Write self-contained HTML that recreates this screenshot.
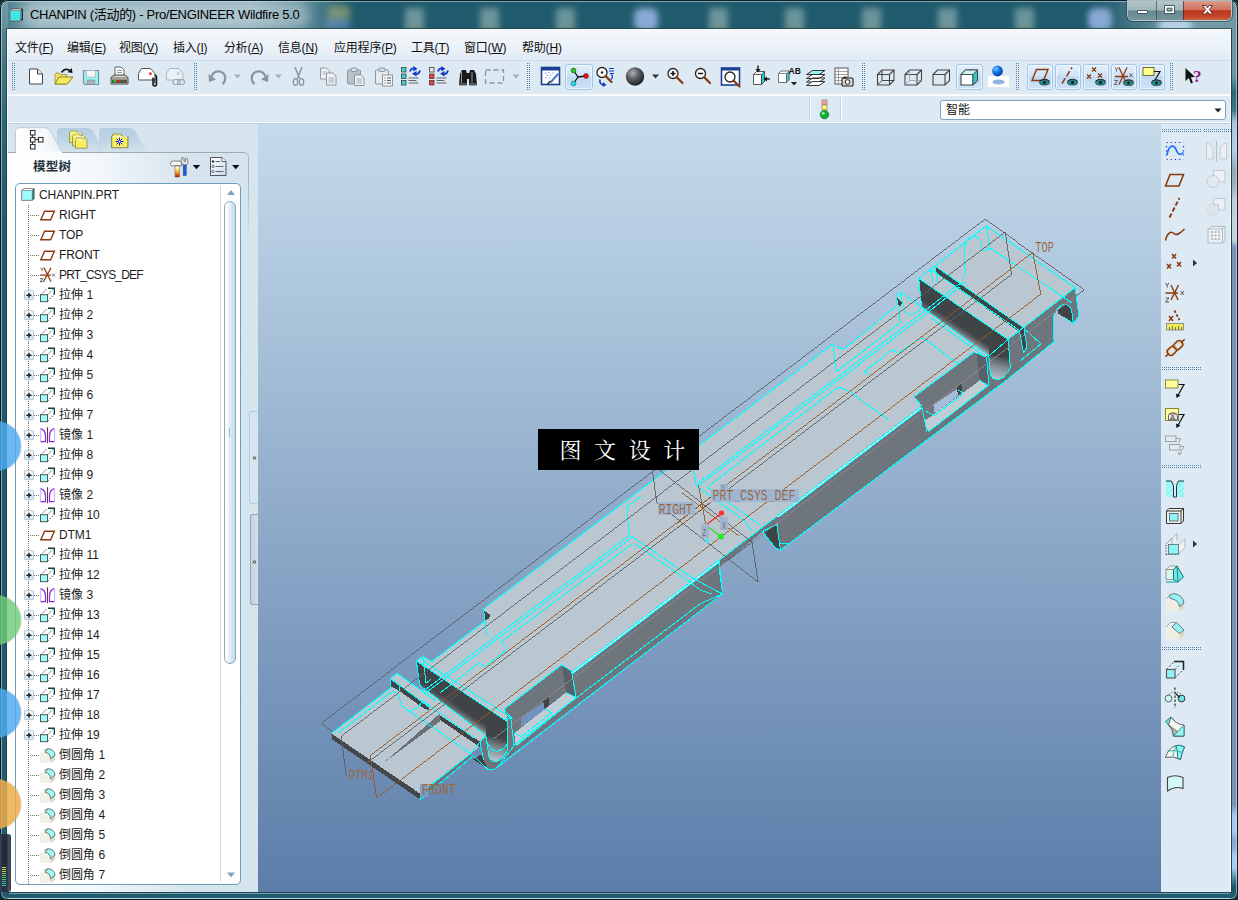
<!DOCTYPE html>
<html lang="zh">
<head>
<meta charset="utf-8">
<title>CHANPIN - Pro/ENGINEER Wildfire 5.0</title>
<style>
*{box-sizing:border-box;margin:0;padding:0}
html,body{width:1238px;height:900px;overflow:hidden}
body{position:relative;background:#0b2d2c;font-family:"Liberation Sans","Noto Sans CJK SC",sans-serif;font-size:13px;color:#1a1a1a}
div,span,svg{position:absolute}
#frame{left:0;top:0;width:1238px;height:900px;background:#205b6d;border-radius:8px 8px 7px 7px;overflow:hidden}
#frameedge{left:0;top:0;width:1238px;height:900px;border:1px solid #0a1d24;border-radius:8px 8px 7px 7px;box-shadow:inset 0 0 0 1px rgba(210,235,240,.55)}
#rightglow{left:1232px;top:0;width:5px;height:892px;background:linear-gradient(to bottom,#6f97a2 0,#6f97a2 75px,#2e6a7a 92px,#3f7483 110px,#a9c4e2 122px,#b5cde8 150px,#98a8b8 170px,#a3b1c0 188px,#c5ced8 200px,#c9d1da 240px,#7a95b8 247px,#7a95b8 805px,#a8c8f0 815px,#a8c8f0 832px,#88a8d0 840px,#8eaed6 848px,#a8cdf5 856px,#a8cdf5 868px,#4f8aa0 878px,#1f5a6c 886px)}
#titler{left:1100px;top:0;width:138px;height:29px;background:linear-gradient(to right,rgba(125,163,173,0) 0,rgba(110,150,162,.55) 40px,rgba(125,163,173,.9) 75px,rgba(118,157,168,.95) 100%)}
#titleglow{left:0;top:0;width:360px;height:29px;background:linear-gradient(to right,rgba(120,160,170,.45) 0,rgba(165,194,202,.75) 40px,rgba(172,198,207,.78) 250px,rgba(150,185,195,.55) 300px,rgba(120,160,172,0) 350px)}
#titleglow2{left:20px;top:2px;width:290px;height:26px;border-radius:13px;background:rgba(235,240,245,.35);filter:blur(5px)}
.blob{top:8px;width:19px;height:23px;background:linear-gradient(to bottom,#a9c3c4 0,#a9c3c4 60%,#c0c49a 100%);filter:blur(3px);opacity:.55;border-radius:2px}
.blob.b{background:#a4bef0;opacity:.8;width:24px;border-radius:8px}
#title{left:30px;top:5px;font-size:13px;line-height:19px;color:#000;white-space:nowrap;letter-spacing:-.3px}
#client{left:7px;top:29px;width:1224px;height:863px;background:#dde9f3;border:1px solid #fff;box-shadow:0 0 0 1px rgba(30,60,70,.7)}
#menubar{left:8px;top:30px;width:1222px;height:30px;background:linear-gradient(to bottom,#f4f8fc 0,#eaf1f8 60%,#e1ebf4 100%)}
.mi{top:39px;font-size:12px;line-height:18px;letter-spacing:-.2px;white-space:nowrap;color:#111}
.mi u{text-decoration:underline;text-underline-offset:1px}
#tb1{left:8px;top:60px;width:1222px;height:35px;background:#dde9f3;border-top:1px solid #cfdce8;border-bottom:1px solid #f4f8fc}
.grip{width:3px;background:repeating-linear-gradient(to bottom,#4f83ab 0,#4f83ab 1px,transparent 1px,transparent 2px);-webkit-mask:linear-gradient(to right,#000 0,#000 1px,transparent 1px,transparent 2px,#000 2px,#000 3px);mask:linear-gradient(to right,#000 0,#000 1px,transparent 1px,transparent 2px,#000 2px,#000 3px)}
.hgrip{height:3px;background:repeating-linear-gradient(to right,#4f83ab 0,#4f83ab 1px,transparent 1px,transparent 2px);-webkit-mask:linear-gradient(to bottom,#000 0,#000 1px,transparent 1px,transparent 2px,#000 2px,#000 3px);mask:linear-gradient(to bottom,#000 0,#000 1px,transparent 1px,transparent 2px,#000 2px,#000 3px)}
#vp{left:258px;top:124px;width:903px;height:768px;background:linear-gradient(to bottom,#c5dbeb 0,#5c7daa 100%)}
#vptop{left:8px;top:122px;width:1222px;height:1px;background:#fff}
#vptop2{left:8px;top:123px;width:1222px;height:1px;background:#bccfde}
#leftp{left:8px;top:124px;width:250px;height:768px;background:#d4e3ee}
#rightp{left:1161px;top:124px;width:69px;height:768px;background:#dde9f3}
</style>
</head>
<body>
<div id="frame">
<div id="titleglow"></div><div id="titleglow2"></div>
<div class="blob" style="left:328px;top:6px;width:22px;height:14px;background:#c8c070;opacity:.5;filter:blur(3.500px)"></div><div class="blob" style="left:326px;top:19px;width:24px;height:10px;background:#7f9fe0;opacity:.5;filter:blur(3px)"></div>
<div class="blob" style="left:405px"></div><div class="blob" style="left:480px"></div><div class="blob" style="left:556px"></div>
<div class="blob b" style="left:634px"></div><div class="blob" style="left:709px"></div><div class="blob" style="left:785px"></div>
<div class="blob" style="left:862px"></div><div class="blob" style="left:938px"></div><div class="blob" style="left:1015px"></div>
<div class="blob b" style="left:1088px"></div>
<div id="titler"></div>
<div class="blob b" style="left:1158px;top:18px;width:34px;height:14px;background:#c4dcf2;opacity:.85;filter:blur(3px)"></div>
<div style="left:0;top:0;width:8px;height:240px;background:linear-gradient(to bottom,rgba(120,160,172,.75) 0,rgba(95,140,152,.6) 60px,rgba(70,120,135,.35) 130px,rgba(32,91,109,0) 230px)"></div>
<div id="rightglow"></div>
</div>
<div id="frameedge"></div>
<div style="left:9px;top:893px;width:1221px;height:1px;background:rgba(200,225,232,.5)"></div>
<div style="left:8px;top:898px;width:1222px;height:1px;background:rgba(235,245,248,.55)"></div>
<svg style="left:9px;top:8px" width="15" height="14" viewBox="0 0 15 14"><path d="M.8 2.800 L2.800 .8 L13.800 .8 L13.800 11.200 L11.800 13.200 L.8 13.200Z" fill="#111"/><rect x="1.300" y="2.800" width="10" height="9.800" fill="#3fe8e8"/><path d="M1.800 2.300 L3.200 1.300 L12.600 1.300 L11.300 2.300Z" fill="#fff"/><path d="M11.800 2.800 L13 1.700 L13 10.600 L11.800 11.800Z" fill="#2a9a9a"/><rect x="1" y="2.600" width="10.500" height="10.200" fill="none" stroke="#d8b8b0" stroke-width=".5"/></svg>
<div id="title">CHANPIN (活动的) - Pro/ENGINEER Wildfire 5.0</div>
<div id="client"></div>
<div id="menubar"></div>
<span class="mi" style="left:15px">文件(<u>F</u>)</span>
<span class="mi" style="left:67px">编辑(<u>E</u>)</span>
<span class="mi" style="left:119px">视图(<u>V</u>)</span>
<span class="mi" style="left:173px">插入(<u>I</u>)</span>
<span class="mi" style="left:224px">分析(<u>A</u>)</span>
<span class="mi" style="left:278px">信息(<u>N</u>)</span>
<span class="mi" style="left:334px">应用程序(<u>P</u>)</span>
<span class="mi" style="left:411px">工具(<u>T</u>)</span>
<span class="mi" style="left:464px">窗口(<u>W</u>)</span>
<span class="mi" style="left:522px">帮助(<u>H</u>)</span>
<div id="tb1"></div>
<div id="vptop"></div><div id="vptop2"></div>
<div id="leftp"></div>
<div id="vp"></div>
<div id="rightp"></div>
<style>
.abtn{top:64px;height:26px;border:1px solid #a3c7e8;border-radius:3px;background:linear-gradient(to bottom,#e3f0fb 0,#cfe3f6 45%,#bfd9f2 50%,#cde3f7 100%);box-shadow:inset 0 0 0 1px rgba(255,255,255,.6)}
</style>
<div class="grip" style="left:12px;top:63px;height:27px"></div>
<div class="grip" style="left:194px;top:63px;height:27px"></div>
<div class="grip" style="left:527px;top:63px;height:27px"></div>
<div class="grip" style="left:862px;top:63px;height:27px"></div>
<div class="grip" style="left:1016px;top:63px;height:27px"></div>
<div class="grip" style="left:1170px;top:63px;height:27px"></div>
<div class="abtn" style="left:565px;width:28px"></div>
<div class="abtn" style="left:956px;width:27px"></div>
<div class="abtn" style="left:1027px;width:26px"></div>
<div class="abtn" style="left:1055px;width:26px"></div>
<div class="abtn" style="left:1083px;width:26px"></div>
<div class="abtn" style="left:1111px;width:26px"></div>
<div class="abtn" style="left:1139px;width:26px"></div>
<svg style="left:8px;top:60px" width="1222" height="35" viewBox="8 60 1222 35">
<defs>
<radialGradient id="sph" cx=".38" cy=".32" r=".7"><stop offset="0" stop-color="#aeb4ba"/><stop offset=".45" stop-color="#5d6266"/><stop offset="1" stop-color="#1c1e20"/></radialGradient>
<radialGradient id="ball" cx=".35" cy=".3" r=".7"><stop offset="0" stop-color="#7fc4ff"/><stop offset=".5" stop-color="#1176ee"/><stop offset="1" stop-color="#0a3fb0"/></radialGradient>
<g id="eye"><ellipse cx="0" cy="0" rx="5" ry="2.6" fill="#1d8f8f" stroke="#333" stroke-width=".7"/><circle cx="0" cy="0" r="1.4" fill="#111"/><path d="M-5 -1.5 Q0 -5 5 -1.5" stroke="#222" stroke-width="1" fill="none"/></g>
<g id="mag"><circle cx="0" cy="0" r="5" fill="#fff" stroke="#222" stroke-width="1.3"/><path d="M3.6 3.6 L9.5 9.5" stroke="#8a3a10" stroke-width="2.2" stroke-linecap="round"/></g>
<g id="dd"><path d="M-3.5 -2 L3.5 -2 L0 2Z"/></g>
</defs>
<g transform="translate(25.0,65.5)"><path d="M4.5 3.5 L12.5 3.5 L17.5 8.5 L17.5 18.5 L4.5 18.5Z" fill="#fff" stroke="#444" stroke-width="1"/><path d="M12.5 3.5 L12.5 8.5 L17.5 8.5" fill="#e6e6e6" stroke="#444" stroke-width="1"/></g>
<g transform="translate(52.5,65.5)"><path d="M2.5 9 L2.5 18.5 L14 18.5 L14 9 L8 9 L6.5 7.5 L3.5 7.5Z" fill="#efe06a" stroke="#9a8a2a" stroke-width=".8"/><path d="M2.5 18.5 L6.5 11.5 L20.5 11.5 L15 18.5Z" fill="#f6e95e" stroke="#8a7a20" stroke-width=".9"/><path d="M9 7 Q13 1.5 18 5.5" fill="none" stroke="#111" stroke-width="1.6"/><path d="M15 6.8 L20 7.5 L19.3 2.5Z" fill="#111"/></g>
<g transform="translate(80.0,66.0)"><path d="M3.5 4.5 L18.5 4.5 L18.5 18.5 L5 18.5 L3.5 17Z" fill="#98f4f6" stroke="#7b8fa0" stroke-width="1.2"/><rect x="6.5" y="4.5" width="9" height="6.5" fill="#f4f6f8" stroke="#9aa" stroke-width=".6"/><rect x="7" y="14" width="8" height="4.5" fill="#a9b0b6" stroke="#7b8fa0" stroke-width=".6"/></g>
<g transform="translate(108.5,65.5)"><path d="M6.5 10 L6.5 1.5 L12.5 1.5 L15.5 4.5 L15.5 10Z" fill="#fff" stroke="#555" stroke-width=".9"/><path d="M8.5 5 L13.5 5 M8.5 7 L13.5 7" stroke="#777" stroke-width=".8"/><path d="M2.5 12 L5.5 9.5 L16.5 9.5 L19.5 12 L19.5 18.5 L2.5 18.5Z" fill="#d8d6c8" stroke="#444" stroke-width="1"/><path d="M2.5 12.5 L19.5 12.5" stroke="#555" stroke-width=".8"/><rect x="3.5" y="14" width="15" height="3.5" fill="#55534b"/><rect x="5" y="14.6" width="2.5" height="2" fill="#2d2"/><rect x="8.5" y="14.6" width="2.5" height="2" fill="#e22"/></g>
<g transform="translate(136.0,65.5)"><path d="M2.5 8 L5.5 3 L14.5 3 L19 8 L19 14.5 L2.5 14.5Z" fill="#fff" stroke="#555" stroke-width="1"/><rect x="13.2" y="7" width="2.4" height="2.4" fill="#e22"/><path d="M17 12 L17 18.5 Q17 20.5 18.7 20.5 Q20.5 20.5 20.5 18.5 L20.5 11.5 Q20.5 9.8 18.8 9.8" fill="none" stroke="#111" stroke-width="1.5"/><path d="M18.8 13 L18.8 18" stroke="#111" stroke-width="1"/></g>
<g transform="translate(164.0,65.5)"><g opacity=".55"><path d="M2.5 8 L5.5 3 L14.5 3 L19 8 L19 14.5 L2.5 14.5Z" fill="#f4f7fa" stroke="#7f8c96" stroke-width="1"/><rect x="13.2" y="7" width="2.2" height="2.2" fill="#8a99a5"/><rect x="9" y="14" width="7" height="5" rx="2.5" fill="#eef" stroke="#66727c" stroke-width="1.2"/><rect x="13.5" y="14" width="7" height="5" rx="2.5" fill="none" stroke="#66727c" stroke-width="1.2"/></g></g>
<g transform="translate(207.0,66.0)"><path d="M4 12 Q6 4.5 13 5.5 Q19 7 18 14 Q17.5 16.5 15.5 18" fill="none" stroke="#8b949b" stroke-width="2.2"/><path d="M1.5 8 L9 13.5 L2 16Z" fill="#8b949b"/></g>
<use href="#dd" x="237.5" y="76.5" fill="#a9b2b9"/>
<g transform="translate(248.0,66.0)"><path d="M18 12 Q16 4.5 9 5.5 Q3 7 4 14 Q4.5 16.5 6.5 18" fill="none" stroke="#8b949b" stroke-width="2.2"/><path d="M20.5 8 L13 13.5 L20 16Z" fill="#8b949b"/></g>
<use href="#dd" x="278.5" y="76.5" fill="#a9b2b9"/>
<g transform="translate(287.5,65.5)"><path d="M7.5 1.5 L12 13 M14.5 1.5 L10 13" stroke="#8b949b" stroke-width="1.5" fill="none"/><ellipse cx="8" cy="16.5" rx="2.2" ry="3.3" fill="none" stroke="#8b949b" stroke-width="1.3"/><ellipse cx="14" cy="16.5" rx="2.2" ry="3.3" fill="none" stroke="#8b949b" stroke-width="1.3"/></g>
<g transform="translate(317.5,65.5)"><g stroke="#8d979f" stroke-width="1" fill="#eef2f6"><path d="M3 2.5 L9 2.5 L12 5.5 L12 13.5 L3 13.5Z"/><path d="M9 7.5 L15.5 7.5 L18.5 10.5 L18.5 19.5 L9 19.5Z"/><path d="M11 12.5 L16.5 12.5 M11 14.5 L16.5 14.5 M11 16.5 L16.5 16.5 M5 6.5 L9 6.5 M5 8.5 L8 8.5" stroke-width=".8"/></g></g>
<g transform="translate(345.0,65.5)"><g stroke="#8d979f" stroke-width="1"><rect x="2.5" y="4.5" width="13" height="14" rx="1" fill="#b9c0c6"/><rect x="6" y="2.5" width="6" height="3.5" rx="1" fill="#d9dee2"/><path d="M9.5 9.5 L16 9.5 L19 12.5 L19 20 L9.5 20Z" fill="#eef2f6"/><path d="M11.5 13.5 L17 13.5 M11.5 15.5 L17 15.5 M11.5 17.5 L17 17.5" stroke-width=".8"/></g></g>
<g transform="translate(373.0,65.5)"><g stroke="#8d979f" stroke-width="1"><rect x="2.5" y="4.5" width="13" height="14" rx="1" fill="#e4e9ed"/><rect x="6" y="2.5" width="6" height="3.5" rx="1" fill="#d9dee2"/><rect x="9.5" y="9.5" width="10" height="11" fill="#f2f5f8"/><path d="M11.5 12.5 L12.5 12.5 M14 12.5 L18 12.5 M11.5 15 L12.5 15 M14 15 L18 15 M11.5 17.5 L12.5 17.5 M14 17.5 L18 17.5" stroke="#59636b" stroke-width="1.1"/></g></g>
<g transform="translate(400.5,65.5)"><g><rect x="1" y="2" width="4.5" height="4.5" fill="#3fd0c8" stroke="#444" stroke-width=".8"/><rect x="1" y="8.5" width="4.5" height="4.5" fill="#3fd0c8" stroke="#444" stroke-width=".8"/><rect x="1" y="15" width="4.5" height="4.5" fill="#3fd0c8" stroke="#444" stroke-width=".8"/><path d="M8 12.5 L18 12.5 M8 15 L16 15 M8 17.5 L18 17.5" stroke="#666" stroke-width="1"/><path d="M9.5 6 Q10.5 2.5 14 3" fill="none" stroke="#1237c9" stroke-width="1.8"/><path d="M12.8 .5 L17 3.2 L12.8 6Z" fill="#1237c9"/><path d="M19.5 5 Q18.5 9 14.5 8.5" fill="none" stroke="#1237c9" stroke-width="1.8"/><path d="M16 5.5 L11.5 8.2 L16 11Z" fill="#1237c9"/></g></g>
<g transform="translate(428.5,65.5)"><g><rect x="1" y="2" width="4.5" height="4.5" fill="#e8e8e8" stroke="#444" stroke-width=".8"/><rect x="1" y="8.5" width="4.5" height="4.5" fill="#ee3b3b" stroke="#444" stroke-width=".8"/><rect x="1" y="15" width="4.5" height="4.5" fill="#ee3b3b" stroke="#444" stroke-width=".8"/><path d="M8 12.5 L18 12.5 M8 15 L16 15 M8 17.5 L18 17.5" stroke="#666" stroke-width="1"/><path d="M9.5 6 Q10.5 2.5 14 3" fill="none" stroke="#1237c9" stroke-width="1.8"/><path d="M12.8 .5 L17 3.2 L12.8 6Z" fill="#1237c9"/><path d="M19.5 5 Q18.5 9 14.5 8.5" fill="none" stroke="#1237c9" stroke-width="1.8"/><path d="M16 5.5 L11.5 8.2 L16 11Z" fill="#1237c9"/></g></g>
<g transform="translate(457.0,66.0)"><path d="M2 19 L3 8 L5 4 L9 4 L10 8 L10 19Z M12 19 L12 8 L13 4 L17 4 L19 8 L20 19Z" fill="#1a1a1a"/><rect x="9" y="7" width="4" height="6" fill="#1a1a1a"/><path d="M4.5 6 L4.5 17 M15 6 L15 17" stroke="#9a9a9a" stroke-width="1"/><rect x="2.5" y="17" width="7" height="2.5" fill="#555"/><rect x="12.5" y="17" width="7" height="2.5" fill="#555"/></g>
<g transform="translate(484.0,65.5)"><rect x="1.5" y="4.5" width="18" height="13" fill="none" stroke="#8b949b" stroke-width="1.3" stroke-dasharray="5 3"/></g>
<use href="#dd" x="516" y="76.5" fill="#a9b2b9"/>
<g transform="translate(539.5,65.0)"><rect x="2" y="2.5" width="18" height="17" fill="#fff" stroke="#1c3f94" stroke-width="1.6"/><rect x="2" y="2.5" width="18" height="3" fill="#1c3f94"/><path d="M10 17 L18 8 L19.5 9.5 L12 18Z" fill="#4b7bd0"/><path d="M6 8 L7 8 M9 7.5 L10 7.5 M7.5 10.5 L8.5 10.5 M11 10 L12 10 M9.5 13 L10.5 13 M13 8 L14 8 M6 12.5 L7 12.5" stroke="#3f74d8" stroke-width="1"/><path d="M8 19 L11 16" stroke="#222" stroke-width="1.3"/></g>
<g transform="translate(568.0,66.0)"><path d="M5.5 4.5 L10 11 L5.5 17.5 M10 11 L18 10" stroke="#111" stroke-width="1.3" fill="none"/><circle cx="5.5" cy="4.5" r="2.4" fill="#2c2" stroke="#151" stroke-width=".6"/><circle cx="18" cy="10" r="2.4" fill="#e11" stroke="#611" stroke-width=".6"/><circle cx="5.5" cy="17.5" r="2.4" fill="#2dd" stroke="#166" stroke-width=".6"/></g>
<g transform="translate(595.0,65.5)"><use href="#mag" x="7" y="7"/><circle cx="7" cy="7" r="1.2" fill="#222"/><path d="M14 3 L19 3 M14 5.5 L19 5.5 M15 8 L19 8" stroke="#1237c9" stroke-width="1"/><path d="M5 14 Q4 19 9 19.5" fill="none" stroke="#1237c9" stroke-width="1.6"/><path d="M8 16.5 L11.5 19.5 L7.5 21.5Z" fill="#1237c9"/><path d="M16 9 Q19 11 16 14" stroke="#1237c9" fill="none" stroke-width="1.2"/></g>
<circle cx="635" cy="76.5" r="9.2" fill="url(#sph)"/>
<use href="#dd" x="655.5" y="76.5" fill="#333"/>
<g transform="translate(665.0,65.5)"><use href="#mag" x="8" y="8"/><path d="M5.5 8 L10.5 8 M8 5.5 L8 10.5" stroke="#111" stroke-width="1.5"/></g>
<g transform="translate(692.5,65.5)"><use href="#mag" x="8" y="8"/><path d="M5.5 8 L10.5 8" stroke="#111" stroke-width="1.5"/></g>
<g transform="translate(720.0,65.5)"><rect x="1.5" y="2.5" width="18" height="17" fill="#fff" stroke="#1c3f94" stroke-width="1.6"/><rect x="1.5" y="2.5" width="18" height="2.5" fill="#1c3f94"/><use href="#mag" x="10" y="11.5" transform="scale(1)"/></g>
<g transform="translate(748.5,65.5)"><path d="M5 9 L8 6 L16 6 L16 16 L13 19 L5 19Z" fill="#fff" stroke="#444" stroke-width=".9"/><path d="M13 9 L16 6 L16 16 L13 19Z" fill="#3cc" stroke="#444" stroke-width=".8"/><path d="M5 9 L13 9 L13 19" fill="none" stroke="#444" stroke-width=".8"/><path d="M9.5 0 L9.5 6" stroke="#111" stroke-width="1.3"/><path d="M7 3.5 L9.5 7 L12 3.5Z" fill="#111"/><path d="M21.5 13.5 L16 13.5" stroke="#111" stroke-width="1.3"/><path d="M18.5 11 L15 13.5 L18.5 16Z" fill="#111"/></g>
<g transform="translate(777.0,65.5)"><path d="M1.5 8 L4 5.5 L12 5.5 L12 14.5 L9.5 17 L1.5 17Z" fill="#fff" stroke="#666" stroke-width=".9"/><path d="M9.5 8 L12 5.5 L12 14.5 L9.5 17Z" fill="#3cc" stroke="#666" stroke-width=".7"/><path d="M1.5 8 L9.5 8 L9.5 17" fill="none" stroke="#666" stroke-width=".8"/><text x="11.5" y="8" font-family="Liberation Sans,sans-serif" font-size="8.5" font-weight="bold" fill="#111">AB</text><path d="M14 16.5 L20 16.5 L17 20Z" fill="#222"/></g>
<g transform="translate(805.0,66.0)"><path d="M1.5 16 L7.5 12 L20 12 L14 16Z M1.5 12.5 L7.5 8.5 L20 8.5 L14 12.5Z" fill="#fff" stroke="#333" stroke-width="1"/><path d="M1.5 19.5 L7.5 15.5 L20 15.5 L14 19.5Z" fill="#fff" stroke="#333" stroke-width="1"/><path d="M1.5 8.5 L7.5 4.5 L20 4.5 L14 8.5Z" fill="#9af4f4" stroke="#333" stroke-width="1"/></g>
<g transform="translate(832.5,65.5)"><rect x="2.5" y="2.5" width="13" height="16" fill="#fff" stroke="#555" stroke-width="1"/><path d="M2.5 6 L15.5 6 M2.5 9 L15.5 9 M2.5 12 L15.5 12 M2.5 15 L15.5 15 M6 2.5 L6 18.5" stroke="#888" stroke-width=".8"/><rect x="9.5" y="12.5" width="11" height="8" rx="1" fill="#d8d8d8" stroke="#222" stroke-width="1.1"/><circle cx="15" cy="16.5" r="2.3" fill="#fff" stroke="#222" stroke-width="1"/><rect x="11" y="11" width="3" height="2" fill="#222"/></g>
<g transform="translate(875.0,66.0)"><path d="M2.5 8.5 L7 4 L19 4 L19 14.5 L14.5 19 L2.5 19Z" fill="none" stroke="#444" stroke-width="1.1"/><path d="M2.5 8.5 L14.5 8.5 L14.5 19 M14.5 8.5 L19 4" fill="none" stroke="#444" stroke-width="1.1"/><path d="M7 4 L7 14.5 L2.5 19 M7 14.5 L19 14.5" fill="none" stroke="#444" stroke-width="1"/></g>
<g transform="translate(902.5,66.0)"><path d="M2.5 8.5 L7 4 L19 4 L19 14.5 L14.5 19 L2.5 19Z" fill="none" stroke="#444" stroke-width="1.1"/><path d="M2.5 8.5 L14.5 8.5 L14.5 19 M14.5 8.5 L19 4" fill="none" stroke="#444" stroke-width="1.1"/><path d="M7 4 L7 14.5 L2.5 19 M7 14.5 L19 14.5" fill="none" stroke="#9aa3aa" stroke-width=".9"/></g>
<g transform="translate(930.5,66.0)"><path d="M2.5 8.5 L7 4 L19 4 L19 14.5 L14.5 19 L2.5 19Z" fill="none" stroke="#444" stroke-width="1.1"/><path d="M2.5 8.5 L14.5 8.5 L14.5 19 M14.5 8.5 L19 4" fill="none" stroke="#444" stroke-width="1.1"/></g>
<g transform="translate(958.5,66.0)"><path d="M2.5 8.5 L7 4 L19 4 L19 14.5 L14.5 19 L2.5 19Z" fill="#fff" stroke="#444" stroke-width="1.1"/><path d="M2.5 8.5 L14.5 8.5 L14.5 19 M14.5 8.5 L19 4" fill="none" stroke="#444" stroke-width="1.1"/><path d="M14.5 8.5 L19 4 L19 14.5 L14.5 19Z" fill="#35c8c8" stroke="#444" stroke-width=".9"/><path d="M2.5 8.5 L7 4 L19 4 L14.5 8.5Z" fill="#c9f6f6" stroke="#444" stroke-width=".9"/></g>
<rect x="988" y="76" width="21" height="11" fill="#fff"/><ellipse cx="998.5" cy="82" rx="6" ry="2.6" fill="#8fb0e0"/><circle cx="997.5" cy="71" r="5.4" fill="url(#ball)"/>
<g transform="translate(1029.0,65.5)"><path d="M3 15 L7.5 4 L19 4 L14.5 15Z" fill="none" stroke="#8a3a10" stroke-width="1.4"/><use href="#eye" x="15.5" y="17"/></g>
<g transform="translate(1057.0,65.5)"><path d="M5 18 L15 2" stroke="#8a3a10" stroke-width="1.5" stroke-dasharray="6 2.5" fill="none"/><use href="#eye" x="15.5" y="17"/></g>
<g transform="translate(1085.0,65.5)"><path d="M7 2 L11 6 M11 2 L7 6 M2 9 L6 13 M6 9 L2 13 M13 8 L17 12 M17 8 L13 12" stroke="#8a3a10" stroke-width="1.3"/><use href="#eye" x="15.5" y="17"/></g>
<g transform="translate(1113.0,65.5)"><path d="M2 11 L15 11 M6 2 L14 19 M14 2 L6 19" stroke="#8a3a10" stroke-width="1.3" fill="none"/><path d="M2 2 L3.5 4 L5 2 M3.5 4 L3.5 6 M16.5 8 L19.5 11.5 M19.5 8 L16.5 11.5 M1.5 15 L4.5 15 L1.5 19 L4.5 19" stroke="#555" stroke-width=".9" fill="none"/><use href="#eye" x="15.5" y="17.5"/></g>
<g transform="translate(1141.0,65.5)"><rect x="2" y="2" width="11" height="8" fill="#ffff8a" stroke="#6a6a3a" stroke-width="1"/><path d="M13 6 L19 6 L14 14.5" fill="none" stroke="#111" stroke-width="1.2"/><use href="#eye" x="15.5" y="17.5"/></g>
<g transform="translate(1183.0,66.0)"><path d="M2.5 2 L2.5 15 L5.8 12 L8 17.5 L10 16.7 L7.8 11.3 L12 11Z" fill="#111"/><text x="10" y="16" font-family="Liberation Serif,serif" font-size="17" font-weight="bold" fill="#8a168a">?</text></g>
</svg>
<style>
#hatch{left:8px;top:124px;width:250px;height:768px;background:repeating-linear-gradient(135deg,#d2e2ed 0,#d2e2ed 1.9px,#e3edf4 2.1px,#e3edf4 2.6px,#d2e2ed 2.83px)}
.tabline{height:1px;background:#a3abb0}
#phead{left:8px;top:153px;width:240px;height:739px;border-top-right-radius:5px;background:linear-gradient(to right,#ffffff 0,#f4f8fb 35%,rgba(214,228,238,.75) 75%,rgba(209,225,236,.3) 100%)}
#pbr{left:243px;top:152px;width:6px;height:90px;border-right:1px solid #aeb7bd;border-top:1px solid #a3abb0;border-top-right-radius:5px;-webkit-mask:linear-gradient(to bottom,#000 0,#000 35%,transparent 100%);mask:linear-gradient(to bottom,#000 0,#000 35%,transparent 100%)}
#phatch2{left:241px;top:186px;width:8px;height:706px;background:repeating-linear-gradient(135deg,#d2e2ed 0,#d2e2ed 1.9px,#e3edf4 2.1px,#e3edf4 2.6px,#d2e2ed 2.83px)}
#pheadw{left:8px;top:152px;width:8px;height:740px;background:#fff}
#pbot{left:8px;top:885px;width:241px;height:7px;background:#eef4f9}
#tree{left:15px;top:183px;width:226px;height:702px;background:#fff;border:1px solid #6d9dbd;border-radius:5px;overflow:hidden}
#tsep{left:220px;top:186px;width:1px;height:696px;background:#c9dcea}
#thumb{left:224px;top:201px;width:12px;height:463px;border:1px solid #86aac2;border-radius:6px;background:linear-gradient(to right,#fff 0,#fdfeff 15%,#dbe8f1 60%,#c3d8e7 100%)}
.tr{left:59px;font-size:12px;line-height:16px;height:16px;white-space:nowrap;color:#1c1c1c;letter-spacing:-.1px;word-spacing:.5px}
.tr b{font-weight:normal;font-size:12.5px;letter-spacing:.2px}
#mtitle{left:33px;top:158px;font-size:12.5px;font-weight:bold;line-height:18px;color:#26323a;letter-spacing:.2px}
</style>
<div id="hatch"></div>
<svg style="left:8px;top:124px" width="250" height="29" viewBox="8 124 250 29">
<defs><linearGradient id="tg" x1="0" y1="0" x2="1" y2="0"><stop offset="0" stop-color="#ffffff"/><stop offset=".6" stop-color="#f6f9fb"/><stop offset="1" stop-color="#e4edf3"/></linearGradient>
<linearGradient id="tg2" x1="0" y1="0" x2="0" y2="1"><stop offset="0" stop-color="#b3cde1"/><stop offset=".6" stop-color="#bcd3e4" stop-opacity=".8"/><stop offset="1" stop-color="#c9dbe8" stop-opacity=".35"/></linearGradient>
<g id="fold"><path d="M.5 3 L2 .8 L7.500 .8 L9 3 L13 3 L13 12.500 L.5 12.500Z" fill="#f7ef5c" stroke="#8a8a5a" stroke-width=".9"/><path d="M1 3.200 L12.500 3.200" stroke="#fffbd0" stroke-width="1"/><path d="M2 .9 L7.500 .9" stroke="#cfc9a0" stroke-width="1"/></g></defs>
<path d="M99 152 L99 132 Q99 128 103 128 L129 128 Q133 128 135.500 132 L147 152Z" fill="url(#tg2)"/>
<path d="M57 152 L57 132 Q57 128 61 128 L87 128 Q91 128 93.500 132 L105 152Z" fill="url(#tg2)"/>
<path d="M15.500 152.500 L15.500 132 Q15.500 127.700 20 127.700 L45 127.700 Q48.500 127.700 50.500 131.500 L62.500 152.500Z" fill="url(#tg)" stroke="#c3ccd2" stroke-width="1"/>
<rect x="16" y="151.500" width="46" height="1.500" fill="#fdfeff"/>
<g fill="#fff" stroke="#333" stroke-width="1.100"><path d="M32.500 135 V145 M35 139.500 H38.500" fill="none"/><rect x="30.500" y="130.500" width="4.500" height="4.500"/><rect x="30.500" y="137.500" width="4.500" height="4.500"/><rect x="30.500" y="144.500" width="4.500" height="4.500"/><rect x="38.500" y="137.500" width="4.500" height="4.500"/></g>
<use href="#fold" x="69" y="130" transform="translate(0,0) scale(1)"/><use href="#fold" x="72" y="133.500"/><g transform="translate(75,137) scale(.92,.9)"><use href="#fold"/></g>
<g transform="translate(111,133.200) scale(1.300,1.160)"><use href="#fold"/></g>
<path d="M119.500 137.500 V145.500 M115.500 141.500 H123.500 M116.700 138.700 L122.300 144.300 M122.300 138.700 L116.700 144.300" stroke="#1020d0" stroke-width="1"/><circle cx="119.500" cy="141.500" r="1.300" fill="#fff" stroke="#1020d0" stroke-width=".8"/>
</svg>
<div id="phead"></div><div id="phatch2"></div><div id="pbr"></div><div id="pheadw"></div>
<div class="tabline" style="left:62px;top:152px;width:182px"></div>
<div class="tabline" style="left:8px;top:152px;width:8px"></div>
<div id="mtitle">模型树</div>
<svg style="left:166px;top:154px" width="80" height="26" viewBox="166 154 80 26">
<defs><linearGradient id="hh" x1="0" y1="0" x2="0" y2="1"><stop offset="0" stop-color="#fff"/><stop offset=".35" stop-color="#ffe45a"/><stop offset=".7" stop-color="#ee7a1a"/><stop offset="1" stop-color="#a01010"/></linearGradient>
<linearGradient id="hd" x1="0" y1="0" x2="1" y2="1"><stop offset="0" stop-color="#fff"/><stop offset="1" stop-color="#c4ddf4"/></linearGradient></defs>
<path d="M170.500 163.500 Q170.500 161 173 161 L180.500 161 L181.500 163 L181.500 166 L179.500 166 L179.500 165.500 L175 165.500 L175 166 L172 166 L170.500 165Z" fill="#f4f4f4" stroke="#777" stroke-width=".9"/>
<rect x="175" y="166" width="4.500" height="11" fill="url(#hh)" stroke="#8a6a4a" stroke-width=".6"/>
<path d="M181 161 L182 157.500 L184 158.500 L184 161.500 L185.500 161.500 L185.500 158 L187.500 159 L188 162.500 L186.500 165 L183 165Z" fill="#e9e9e9" stroke="#777" stroke-width=".9"/>
<rect x="183.200" y="165" width="3" height="10.500" fill="#1c5fe0" stroke="#334a80" stroke-width=".6"/>
<path d="M192.700 165 L200.200 165 L196.450 169.300Z M232 165 L239.500 165 L235.750 169.300Z" fill="#111"/>
<path d="M210.500 157.500 L222 157.500 L226 161.500 L226 175.500 L210.500 175.500Z" fill="url(#hd)" stroke="#555" stroke-width="1"/><path d="M222 157.500 L222 161.500 L226 161.500" fill="#fff" stroke="#555" stroke-width=".9"/>
<g stroke="#6a6458" stroke-width="1.100" fill="none"><path d="M215.500 161.500 H220 M215.500 166.500 H223.500 M215.500 171.500 H223.500"/></g>
<circle cx="213" cy="161.500" r="1.200" fill="#333"/><circle cx="213" cy="166.500" r="1.100" fill="#fff" stroke="#333" stroke-width=".7"/><circle cx="213" cy="171.500" r="1.100" fill="#fff" stroke="#333" stroke-width=".7"/>
</svg>

<div id="tree"></div>
<div id="tsep"></div>
<div id="thumb"></div>
<div style="left:249px;top:411px;width:9px;height:93px;border:1px solid #b4cfe3;border-right:none;border-radius:3px 0 0 3px;background:rgba(214,228,238,.5)"></div>
<div style="left:250px;top:514px;width:8px;height:91px;border:1px solid #93a4b2;border-right:none;border-radius:3px 0 0 3px;background:linear-gradient(to right,#c3d3df,#d4e0e9)"></div>
<svg style="left:250px;top:450px" width="9" height="120" viewBox="0 0 9 120"><circle cx="4.500" cy="8" r="1.300" fill="#cfe0ec" stroke="#333" stroke-width=".8"/><circle cx="4.500" cy="112" r="1.300" fill="#cfe0ec" stroke="#333" stroke-width=".8"/></svg>
<svg style="left:228px;top:428px" width="4" height="10" viewBox="0 0 4 10"><path d="M1.500 .5 V9" stroke="#4f83ab" stroke-width="1" stroke-dasharray="1 1"/></svg>

<svg style="left:224px;top:186px" width="14" height="12" viewBox="0 0 14 12"><path d="M3 9 L7 4 L11 9Z" fill="#7fa6bf"/></svg>
<svg style="left:224px;top:868px" width="14" height="12" viewBox="0 0 14 12"><path d="M3 4.5 L11 4.5 L7 9.5Z" fill="#7fa6bf"/></svg>

<svg style="left:15px;top:183px" width="206" height="702" viewBox="15 183 206 702">
<defs>
<g id="pl"><path d="M0.8 9 L4.6 0.6 L14.4 0.6 L10.6 9Z" fill="none" stroke="#8a3a10" stroke-width="1.4" stroke-linejoin="miter"/></g>
<g id="ex"><rect x="0.5" y="7.5" width="7" height="7" fill="#9ffcfc" stroke="#555" stroke-width="1"/><path d="M1 7.5 L7 1.5 M7.5 14 L14 7.5 M7.5 7.5 L13.5 1.5" stroke="#444" stroke-width="1" stroke-dasharray="1.600 1.400" fill="none"/><path d="M8 1 L14.3 1 L14.3 7.5" stroke="#333" stroke-width="1.4" fill="none"/><path d="M9 2 L13.5 2 L13.5 6 Z" fill="#b5fbfb"/></g>
<g id="mr"><path d="M0.5 0.5 Q5.5 1.5 5.5 8 L5.5 13.5 L0.5 13.5Z" fill="#fff" stroke="#b7c4ff" stroke-width="1"/><path d="M0.5 0.5 Q5.5 1.5 5.5 8 L5.5 13.5 L0.5 13.5" fill="none" stroke="#9a1fe0" stroke-width="1.2"/><path d="M0.5 0.5 L0.5 13.5" stroke="#b7c4ff" stroke-width="1.2"/><path d="M14.5 0.5 Q9.5 1.5 9.5 8 L9.5 13.5 L14.5 13.5" fill="#fff" stroke="#9a1fe0" stroke-width="1.2"/><path d="M14.5 0.5 L14.5 13.5" stroke="#b7c4ff" stroke-width="1.2"/><path d="M7.5 -1 L7.5 15" stroke="#444" stroke-width="1.1"/></g>
<g id="rd"><path d="M0 5 L5 5 Q10.500 6 10.500 11.500 L10.500 15.500 L0 15.500Z" fill="#f1f0e4"/><path d="M10.500 11.500 L15 8 L15 12.500 L10.500 15.800Z" fill="#dad7c5"/><path d="M5 5 L8 1.500 Q14.500 2 15 8 L10.500 11.500 Q10.500 6 5 5Z" fill="#9ffcfc" stroke="#555" stroke-width=".8" stroke-linejoin="round"/><path d="M4 3.200 L8 1.500" stroke="#666" stroke-width=".8" fill="none"/></g>
<linearGradient id="pmg" x1="0" y1="0" x2="0" y2="1"><stop offset="0" stop-color="#ffffff"/><stop offset="1" stop-color="#cfe3f0"/></linearGradient><g id="pm"><rect x="0.5" y="0.5" width="9" height="9" rx="1.300" fill="url(#pmg)" stroke="#a9c6da"/><path d="M2.500 5 L7.500 5 M5 2.500 L5 7.500" stroke="#1c1c1c" stroke-width="1.400"/></g>
</defs>
<path d="M28.5 205 L28.5 885" stroke="#6e6e6e" stroke-width="1" stroke-dasharray="1 1"/>
<g transform="translate(21,188)"><path d="M0.5 2.5 L2.5 0.5 L13.5 0.5 L13.5 10.5 L11.5 12.5 L0.5 12.5Z" fill="#2b2b2b"/><rect x="0.8" y="2.2" width="10.4" height="10" fill="#9ffcfc" stroke="#8a8a8a" stroke-width=".8"/><path d="M1.5 2 L3 .9 L12.3 .9 L11.2 2Z" fill="#fff"/><path d="M11.6 2.4 L12.9 1.2 L12.9 10.2 L11.6 11.6Z" fill="#2e8f93"/></g>
<path d="M30 215.5 L39 215.5" stroke="#6e6e6e" stroke-width="1" stroke-dasharray="1 1"/>
<use href="#pl" x="40" y="210.7"/>
<path d="M30 235.5 L39 235.5" stroke="#6e6e6e" stroke-width="1" stroke-dasharray="1 1"/>
<use href="#pl" x="40" y="230.7"/>
<path d="M30 255.5 L39 255.5" stroke="#6e6e6e" stroke-width="1" stroke-dasharray="1 1"/>
<use href="#pl" x="40" y="250.7"/>
<path d="M30 275.5 L39 275.5" stroke="#6e6e6e" stroke-width="1" stroke-dasharray="1 1"/>
<g transform="translate(39,266.7)"><path d="M1 8.5 L12 8.5 M5 1 L12 15 M12 1 L4.5 15" stroke="#8a3a10" stroke-width="1.3" fill="none"/><path d="M1.5 1 L3 3 L4.5 1 M3 3 L3 4.5 M13 7 L16 10 M16 7 L13 10 M1 12 L4 12 L1 15 L4 15" stroke="#555" stroke-width=".9" fill="none"/></g>
<path d="M34 295.5 L39 295.5" stroke="#6e6e6e" stroke-width="1" stroke-dasharray="1 1"/>
<use href="#pm" x="24" y="290.2"/>
<use href="#ex" x="40" y="287.2"/>
<path d="M34 315.5 L39 315.5" stroke="#6e6e6e" stroke-width="1" stroke-dasharray="1 1"/>
<use href="#pm" x="24" y="310.2"/>
<use href="#ex" x="40" y="307.2"/>
<path d="M34 335.5 L39 335.5" stroke="#6e6e6e" stroke-width="1" stroke-dasharray="1 1"/>
<use href="#pm" x="24" y="330.2"/>
<use href="#ex" x="40" y="327.2"/>
<path d="M34 355.5 L39 355.5" stroke="#6e6e6e" stroke-width="1" stroke-dasharray="1 1"/>
<use href="#pm" x="24" y="350.2"/>
<use href="#ex" x="40" y="347.2"/>
<path d="M34 375.5 L39 375.5" stroke="#6e6e6e" stroke-width="1" stroke-dasharray="1 1"/>
<use href="#pm" x="24" y="370.2"/>
<use href="#ex" x="40" y="367.2"/>
<path d="M34 395.5 L39 395.5" stroke="#6e6e6e" stroke-width="1" stroke-dasharray="1 1"/>
<use href="#pm" x="24" y="390.2"/>
<use href="#ex" x="40" y="387.2"/>
<path d="M34 415.5 L39 415.5" stroke="#6e6e6e" stroke-width="1" stroke-dasharray="1 1"/>
<use href="#pm" x="24" y="410.2"/>
<use href="#ex" x="40" y="407.2"/>
<path d="M34 435.5 L39 435.5" stroke="#6e6e6e" stroke-width="1" stroke-dasharray="1 1"/>
<use href="#pm" x="24" y="430.2"/>
<use href="#mr" x="40" y="428.2"/>
<path d="M34 455.5 L39 455.5" stroke="#6e6e6e" stroke-width="1" stroke-dasharray="1 1"/>
<use href="#pm" x="24" y="450.2"/>
<use href="#ex" x="40" y="447.2"/>
<path d="M34 475.5 L39 475.5" stroke="#6e6e6e" stroke-width="1" stroke-dasharray="1 1"/>
<use href="#pm" x="24" y="470.2"/>
<use href="#ex" x="40" y="467.2"/>
<path d="M34 495.5 L39 495.5" stroke="#6e6e6e" stroke-width="1" stroke-dasharray="1 1"/>
<use href="#pm" x="24" y="490.2"/>
<use href="#mr" x="40" y="488.2"/>
<path d="M34 515.5 L39 515.5" stroke="#6e6e6e" stroke-width="1" stroke-dasharray="1 1"/>
<use href="#pm" x="24" y="510.2"/>
<use href="#ex" x="40" y="507.2"/>
<path d="M30 535.5 L39 535.5" stroke="#6e6e6e" stroke-width="1" stroke-dasharray="1 1"/>
<use href="#pl" x="40" y="530.7"/>
<path d="M34 555.5 L39 555.5" stroke="#6e6e6e" stroke-width="1" stroke-dasharray="1 1"/>
<use href="#pm" x="24" y="550.2"/>
<use href="#ex" x="40" y="547.2"/>
<path d="M34 575.5 L39 575.5" stroke="#6e6e6e" stroke-width="1" stroke-dasharray="1 1"/>
<use href="#pm" x="24" y="570.2"/>
<use href="#ex" x="40" y="567.2"/>
<path d="M34 595.5 L39 595.5" stroke="#6e6e6e" stroke-width="1" stroke-dasharray="1 1"/>
<use href="#pm" x="24" y="590.2"/>
<use href="#mr" x="40" y="588.2"/>
<path d="M34 615.5 L39 615.5" stroke="#6e6e6e" stroke-width="1" stroke-dasharray="1 1"/>
<use href="#pm" x="24" y="610.2"/>
<use href="#ex" x="40" y="607.2"/>
<path d="M34 635.5 L39 635.5" stroke="#6e6e6e" stroke-width="1" stroke-dasharray="1 1"/>
<use href="#pm" x="24" y="630.2"/>
<use href="#ex" x="40" y="627.2"/>
<path d="M34 655.5 L39 655.5" stroke="#6e6e6e" stroke-width="1" stroke-dasharray="1 1"/>
<use href="#pm" x="24" y="650.2"/>
<use href="#ex" x="40" y="647.2"/>
<path d="M34 675.5 L39 675.5" stroke="#6e6e6e" stroke-width="1" stroke-dasharray="1 1"/>
<use href="#pm" x="24" y="670.2"/>
<use href="#ex" x="40" y="667.2"/>
<path d="M34 695.5 L39 695.5" stroke="#6e6e6e" stroke-width="1" stroke-dasharray="1 1"/>
<use href="#pm" x="24" y="690.2"/>
<use href="#ex" x="40" y="687.2"/>
<path d="M34 715.5 L39 715.5" stroke="#6e6e6e" stroke-width="1" stroke-dasharray="1 1"/>
<use href="#pm" x="24" y="710.2"/>
<use href="#ex" x="40" y="707.2"/>
<path d="M34 735.5 L39 735.5" stroke="#6e6e6e" stroke-width="1" stroke-dasharray="1 1"/>
<use href="#pm" x="24" y="730.2"/>
<use href="#ex" x="40" y="727.2"/>
<path d="M30 755.5 L39 755.5" stroke="#6e6e6e" stroke-width="1" stroke-dasharray="1 1"/>
<use href="#rd" x="40" y="747.2"/>
<path d="M30 775.5 L39 775.5" stroke="#6e6e6e" stroke-width="1" stroke-dasharray="1 1"/>
<use href="#rd" x="40" y="767.2"/>
<path d="M30 795.5 L39 795.5" stroke="#6e6e6e" stroke-width="1" stroke-dasharray="1 1"/>
<use href="#rd" x="40" y="787.2"/>
<path d="M30 815.5 L39 815.5" stroke="#6e6e6e" stroke-width="1" stroke-dasharray="1 1"/>
<use href="#rd" x="40" y="807.2"/>
<path d="M30 835.5 L39 835.5" stroke="#6e6e6e" stroke-width="1" stroke-dasharray="1 1"/>
<use href="#rd" x="40" y="827.2"/>
<path d="M30 855.5 L39 855.5" stroke="#6e6e6e" stroke-width="1" stroke-dasharray="1 1"/>
<use href="#rd" x="40" y="847.2"/>
<path d="M30 875.5 L39 875.5" stroke="#6e6e6e" stroke-width="1" stroke-dasharray="1 1"/>
<use href="#rd" x="40" y="867.2"/>
</svg>
<span class="tr" style="left:39px;top:187.2px">CHANPIN.PRT</span>
<span class="tr" style="top:207.2px">RIGHT</span>
<span class="tr" style="top:227.2px">TOP</span>
<span class="tr" style="top:247.2px">FRONT</span>
<span class="tr" style="top:267.2px;letter-spacing:-.85px">PRT_CSYS_DEF</span>
<span class="tr" style="top:287.2px">拉伸 1</span>
<span class="tr" style="top:307.2px">拉伸 2</span>
<span class="tr" style="top:327.2px">拉伸 3</span>
<span class="tr" style="top:347.2px">拉伸 4</span>
<span class="tr" style="top:367.2px">拉伸 5</span>
<span class="tr" style="top:387.2px">拉伸 6</span>
<span class="tr" style="top:407.2px">拉伸 7</span>
<span class="tr" style="top:427.2px">镜像 1</span>
<span class="tr" style="top:447.2px">拉伸 8</span>
<span class="tr" style="top:467.2px">拉伸 9</span>
<span class="tr" style="top:487.2px">镜像 2</span>
<span class="tr" style="top:507.2px">拉伸 10</span>
<span class="tr" style="top:527.2px">DTM1</span>
<span class="tr" style="top:547.2px">拉伸 11</span>
<span class="tr" style="top:567.2px">拉伸 12</span>
<span class="tr" style="top:587.2px">镜像 3</span>
<span class="tr" style="top:607.2px">拉伸 13</span>
<span class="tr" style="top:627.2px">拉伸 14</span>
<span class="tr" style="top:647.2px">拉伸 15</span>
<span class="tr" style="top:667.2px">拉伸 16</span>
<span class="tr" style="top:687.2px">拉伸 17</span>
<span class="tr" style="top:707.2px">拉伸 18</span>
<span class="tr" style="top:727.2px">拉伸 19</span>
<span class="tr" style="top:747.2px">倒圆角 1</span>
<span class="tr" style="top:767.2px">倒圆角 2</span>
<span class="tr" style="top:787.2px">倒圆角 3</span>
<span class="tr" style="top:807.2px">倒圆角 4</span>
<span class="tr" style="top:827.2px">倒圆角 5</span>
<span class="tr" style="top:847.2px">倒圆角 6</span>
<span class="tr" style="top:867.2px">倒圆角 7</span>
<svg id="model" style="left:258px;top:124px" width="903" height="768" viewBox="258 124 903 768" shape-rendering="crispEdges">
<defs>
<linearGradient id="gJ1" gradientUnits="userSpaceOnUse" x1="500" y1="738" x2="494" y2="760"><stop offset="0" stop-color="#404447"/><stop offset=".45" stop-color="#80888f"/><stop offset="1" stop-color="#b4c0ca"/></linearGradient>
<linearGradient id="gJ2" gradientUnits="userSpaceOnUse" x1="1003" y1="356" x2="997" y2="379"><stop offset="0" stop-color="#404447"/><stop offset=".45" stop-color="#80888f"/><stop offset="1" stop-color="#b4c0ca"/></linearGradient>
<linearGradient id="gF1" gradientUnits="userSpaceOnUse" x1="452" y1="700" x2="446" y2="709"><stop offset="0" stop-color="#404447" stop-opacity="0"/><stop offset="1" stop-color="#aab6c0"/></linearGradient>
<linearGradient id="gF2" gradientUnits="userSpaceOnUse" x1="958" y1="322" x2="952" y2="331"><stop offset="0" stop-color="#404447" stop-opacity="0"/><stop offset="1" stop-color="#aab6c0"/></linearGradient>
</defs>
<polygon points="331.3,733.5 390.9,687.6 390.3,678.5 397.1,673.4 418.5,688.2 510.0,722.0 485.0,742.0 470.8,753.7 419.6,793.3" fill="#bac7d1"/>
<polygon points="331.3,733.5 419.6,793.3 419.5,799.0 332.3,739.5" fill="#43474b"/>
<polygon points="419.6,793.3 470.8,753.7 473.5,755.5 421.0,799.5 419.5,799.0" fill="#6e757d"/>
<polygon points="416.4,661.0 422.6,656.4 431.7,661.5 485.0,621.0 483.5,608.9 832.3,344.4 839.1,348.4 844.8,348.4 896.4,305.9 896.4,295.1 900.0,292.7 921.6,306.9 990.0,355.0 1008.0,339.5 507.0,721.5 505.0,720.2" fill="#bac7d1"/>
<polygon points="507.0,721.5 719.0,560.4 722.6,593.7 493.7,767.7 488.0,769.6 483.5,759.4 480.0,741.8" fill="#6e757d"/>
<polygon points="719.0,560.4 776.8,516.4 776.8,524.4 762.6,531.5 720.0,567.0" fill="#6e757d"/>
<polygon points="776.8,516.4 1008.0,339.5 1010.4,367.4 1003.0,383.0 780.4,550.2" fill="#6e757d"/>
<polygon points="762.6,531.5 776.8,524.4 780.4,549.3 775.0,547.5" fill="#404447"/>
<polygon points="1008.0,339.5 1075.1,287.8 1079.0,315.6 1073.4,324.0 1071.7,310.0 1066.6,304.8 1058.6,307.6 1053.0,317.8 1054.1,341.6 1003.0,383.0 1000.0,370.0" fill="#6e757d"/>
<polygon points="1057.5,309.9 1063.0,305.6 1066.6,305.4 1071.7,309.9 1072.8,322.4 1057.5,313.3" fill="#404447"/>
<polygon points="935.0,266.0 986.3,225.8 1075.1,287.8 1024.0,328.0" fill="#bac7d1"/>
<polygon points="918.8,278.5 930.6,269.3 1019.5,330.5 1008.0,339.5" fill="#bac7d1"/>
<polygon points="930.6,269.3 935.0,266.0 1024.0,328.0 1019.5,330.5" fill="#bac7d1"/>
<polygon points="935.0,266.6 1022.0,327.0 1019.0,331.5 936.0,273.0" fill="#404447"/>
<polygon points="1019.5,331.4 1024.0,328.0 1026.9,347.3 1023.5,352.4" fill="#404447"/>
<polygon points="918.8,278.5 1008.0,339.5 1010.4,367.4 1008.0,372.0 998.0,380.0 990.5,375.4 988.8,356.0 921.6,306.9" fill="#404447"/>
<polygon points="988.8,356.0 1009.5,357.0 1010.4,367.4 1008.0,372.0 1003.0,377.5 998.0,380.0 993.0,378.5 990.5,375.4" fill="url(#gJ2)"/>
<polygon points="921.6,306.9 988.8,356.0 989.5,347.0 921.0,297.0" fill="url(#gF2)"/>
<polygon points="416.4,661.0 505.0,720.2 508.0,723.0 507.5,745.0 485.8,735.6 419.8,685.4" fill="#404447"/>
<polygon points="485.8,735.6 507.6,736.0 507.3,750.3 503.0,758.0 497.0,761.6 491.5,760.0 489.2,758.2" fill="url(#gJ1)"/>
<polygon points="419.8,685.4 485.8,735.6 486.5,726.5 419.0,675.5" fill="url(#gF1)"/>
<polygon points="507.9,723.0 510.7,717.4 514.0,745.8 497.0,768.0 493.7,770.0 488.0,769.6 491.0,763.0 497.0,763.5 503.0,760.0 508.5,751.0" fill="#6e757d"/>
<polygon points="473.3,759.4 481.2,754.3 483.5,759.4 488.0,769.6" fill="#404447"/>
<polygon points="390.3,678.5 397.1,673.4 436.0,701.0 429.0,707.0" fill="#bac7d1"/>
<polygon points="390.9,679.7 399.4,685.9 399.4,691.0 391.4,686.5" fill="#404447"/>
<polygon points="399.4,685.9 428.8,706.9 429.4,709.7 425.4,709.4 399.4,691.0" fill="#404447"/>
<polygon points="439.8,715.1 480.0,741.8 479.5,746.9 439.8,719.7" fill="#404447"/>
<polygon points="439.8,713.6 440.4,721.0 384.0,762.5" fill="#6a7178"/>
<polygon points="483.5,610.6 490.6,615.0 488.9,618.6 485.3,620.4" fill="#404447"/>
<polygon points="897.3,297.5 899.5,299.5 902.0,302.5 900.0,306.5 897.8,304.0" fill="#404447"/>
<polygon points="416.4,661.0 422.6,656.4 431.7,661.5 425.0,666.5" fill="#bac7d1"/>
<polygon points="504.0,709.3 561.7,664.9 566.2,692.4 514.0,733.0" fill="#6e757d"/>
<polygon points="561.7,664.9 571.5,671.0 576.0,697.0 566.2,692.4" fill="#5a6067"/>
<polygon points="514.0,733.3 566.2,692.4 576.0,697.7 516.0,746.0" fill="#c1cdd6"/>
<polygon points="521.0,717.4 543.6,702.7 544.7,709.5 521.5,727.0" fill="#7292bf"/>
<polygon points="543.0,700.4 548.7,697.0 549.3,705.0 544.7,709.0" fill="#404447"/>
<polygon points="914.0,396.9 974.1,352.1 976.4,353.8 979.8,379.9 924.8,420.7 921.4,405.4" fill="#6e757d"/>
<polygon points="976.4,353.8 986.6,357.2 988.8,384.4 979.8,379.9" fill="#5a6067"/>
<polygon points="924.8,420.7 979.8,380.5 988.3,385.6 928.0,432.0" fill="#c1cdd6"/>
<polygon points="933.3,404.8 957.1,389.0 958.2,395.8 934.4,413.3" fill="#a4bcd9"/>
<polygon points="956.5,386.7 961.1,382.7 962.2,391.2 958.2,395.2" fill="#404447"/>
</svg>
<svg id="mlines" style="left:258px;top:124px" width="903" height="768" viewBox="258 124 903 768" fill="none">
<g stroke-linejoin="round" stroke-linecap="round" shape-rendering="crispEdges">
<polyline points="331.3,733.5 390.9,687.6 390.3,678.5 397.1,673.4 418.5,688.2" stroke="#00ffff" stroke-width="1"/>
<polyline points="421.0,799.0 473.5,755.5 488.0,769.6 493.7,770.0 722.6,593.7 719.0,567.0" stroke="#00ffff" stroke-width="1"/>
<polyline points="420.4,793.3 421.0,799.5" stroke="#00ffff" stroke-width="1"/>
<polyline points="420.4,793.3 470.8,753.7 480.0,741.8" stroke="#00ffff" stroke-width="1"/>
<polyline points="338.0,733.2 393.0,691.0 398.0,694.0" stroke="#00ffff" stroke-width="1"/>
<polyline points="390.3,678.5 429.0,707.0" stroke="#00ffff" stroke-width="1"/>
<polyline points="397.1,673.4 436.0,701.0" stroke="#00ffff" stroke-width="1"/>
<polyline points="399.4,691.0 399.4,685.9" stroke="#00ffff" stroke-width="1"/>
<polyline points="419.8,685.4 416.4,661.0 422.6,656.4 431.7,661.5 485.0,621.0 487.0,636.0" stroke="#00ffff" stroke-width="1"/>
<polyline points="416.4,661.0 505.0,720.2 510.7,717.4" stroke="#00ffff" stroke-width="1"/>
<polyline points="422.6,656.4 424.5,662.0 513.0,719.0" stroke="#00ffff" stroke-width="1"/>
<polyline points="422.6,656.4 426.0,683.0 431.0,679.5" stroke="#00ffff" stroke-width="1"/>
<polyline points="419.8,685.4 485.8,735.6 489.2,758.2 492.0,761.0 497.0,761.6 503.0,758.0 507.3,750.3 507.9,723.0 505.0,720.2" stroke="#00ffff" stroke-width="1"/>
<polyline points="480.0,741.8 485.8,735.6" stroke="#00ffff" stroke-width="1"/>
<polyline points="483.5,759.4 480.0,741.8" stroke="#00ffff" stroke-width="1"/>
<polyline points="510.7,717.4 514.0,745.8 497.0,768.0" stroke="#00ffff" stroke-width="1"/>
<polyline points="487.0,742.0 491.0,749.0 497.0,751.5 503.0,749.0 507.5,744.0" stroke="#00ffff" stroke-width="1"/>
<polyline points="485.0,621.0 483.5,608.9 832.3,344.4 839.1,348.4 844.8,348.4 896.4,305.9 896.4,295.1 900.3,292.3 921.6,306.9" stroke="#00ffff" stroke-width="1"/>
<polyline points="832.9,344.4 836.3,371.6 900.3,322.9 898.6,306.0" stroke="#00ffff" stroke-width="1"/>
<polyline points="900.3,292.3 902.0,300.0 905.0,312.0 911.0,315.0 919.0,311.0 921.5,305.0" stroke="#00ffff" stroke-width="1"/>
<polyline points="931.0,318.0 985.0,357.0" stroke="#00ffff" stroke-width="1"/>
<polyline points="571.5,672.5 719.0,560.4" stroke="#00ffff" stroke-width="1"/>
<polyline points="572.5,672.8 719.0,561.5" stroke="#f4e6ec" stroke-width="1"/>
<polyline points="573.5,673.1 719.0,562.6" stroke="#00ffff" stroke-width="1"/>
<polyline points="777.0,516.3 921.4,406.5" stroke="#00ffff" stroke-width="1"/>
<polyline points="778.0,516.6 921.4,407.6" stroke="#f4e6ec" stroke-width="1"/>
<polyline points="779.0,517.0 921.4,408.7" stroke="#00ffff" stroke-width="1"/>
<polyline points="719.0,560.4 777.0,516.3" stroke="#00ffff" stroke-width="1"/>
<polyline points="988.8,356.0 1008.0,339.5" stroke="#00ffff" stroke-width="1"/>
<polyline points="514.0,745.2 700.0,603.9 722.6,593.7" stroke="#00ffff" stroke-width="1"/>
<polyline points="780.4,550.2 1003.0,383.0 1054.1,341.6" stroke="#00ffff" stroke-width="1"/>
<polyline points="780.4,543.0 790.0,543.0 1000.0,385.0" stroke="#00ffff" stroke-width="1"/>
<polyline points="719.0,560.4 722.6,593.7" stroke="#00ffff" stroke-width="1"/>
<polyline points="762.6,531.5 776.8,524.4 780.4,550.2 775.0,547.5 762.6,531.5" stroke="#00ffff" stroke-width="1"/>
<polyline points="921.6,306.9 918.8,278.5 930.6,269.3 935.0,266.0 986.3,225.8 1075.1,287.8 1079.0,315.6 1073.4,324.0 1071.7,310.0 1069.5,306.5 1066.6,304.8 1062.0,305.0 1058.6,307.6 1055.0,312.0 1053.0,317.8 1054.1,341.6" stroke="#00ffff" stroke-width="1"/>
<polyline points="918.8,278.5 1008.0,339.5 1075.1,287.8" stroke="#00ffff" stroke-width="1"/>
<polyline points="930.6,269.3 1019.5,330.5" stroke="#00ffff" stroke-width="1"/>
<polyline points="935.0,266.0 1024.0,328.0 1026.9,347.3 1023.5,352.4 1019.5,331.4" stroke="#00ffff" stroke-width="1"/>
<polyline points="1008.0,339.5 1010.4,367.4 1008.0,372.0 1003.0,377.5 998.0,380.0 993.0,378.5 990.5,375.4 988.8,356.0 921.6,306.9" stroke="#00ffff" stroke-width="1"/>
<polyline points="986.6,357.2 988.8,384.4" stroke="#00ffff" stroke-width="1"/>
<polyline points="1073.4,324.0 1079.0,315.6" stroke="#00ffff" stroke-width="1"/>
<polyline points="1066.0,318.5 1073.4,324.0" stroke="#00ffff" stroke-width="1"/>
<polyline points="1025.8,330.3 1041.0,343.9 1020.0,361.0" stroke="#00ffff" stroke-width="1"/>
<polyline points="1010.0,338.0 1054.1,341.6" stroke="#00ffff" stroke-width="1" stroke-opacity="0"/>
<polyline points="986.3,225.8 990.0,248.0 986.0,251.0 982.0,249.5 980.0,240.0 975.0,236.0 969.0,238.0 964.0,246.0 964.0,262.0 966.0,273.0 963.0,279.0" stroke="#00ffff" stroke-width="1"/>
<polyline points="990.0,248.0 1072.0,303.0" stroke="#00ffff" stroke-width="1"/>
<polyline points="930.6,269.3 933.0,282.0" stroke="#00ffff" stroke-width="1"/>
<polyline points="935.0,266.0 938.0,283.0" stroke="#00ffff" stroke-width="1"/>
<polyline points="504.0,709.3 561.7,664.9 571.5,671.0 576.0,697.0" stroke="#00ffff" stroke-width="1"/>
<polyline points="504.0,709.3 510.7,717.4" stroke="#00ffff" stroke-width="1"/>
<polyline points="514.0,733.3 521.5,736.5 551.5,712.9 545.9,709.5" stroke="#00ffff" stroke-width="1"/>
<polyline points="566.2,692.4 576.0,697.7 516.0,746.0" stroke="#00ffff" stroke-width="1"/>
<polyline points="914.0,396.9 974.1,352.1 986.6,357.2" stroke="#00ffff" stroke-width="1"/>
<polyline points="914.0,396.9 921.4,405.4 924.8,420.7 927.0,432.0" stroke="#00ffff" stroke-width="1"/>
<polyline points="926.0,411.0 934.0,416.0 964.0,393.5 958.2,390.0" stroke="#00ffff" stroke-width="1"/>
<polyline points="979.8,380.5 988.3,385.6 928.0,432.0" stroke="#00ffff" stroke-width="1"/>
<polyline points="629.2,535.7 423.0,691.5" stroke="#00ffff" stroke-width="1"/>
<polyline points="631.4,537.8 425.0,693.5" stroke="#00ffff" stroke-width="1"/>
<polyline points="632.0,544.2 501.3,641.7 506.6,649.7 485.3,666.6 479.0,663.0 440.0,693.0" stroke="#00ffff" stroke-width="1"/>
<polyline points="641.0,496.0 626.9,506.8 629.2,535.1" stroke="#00ffff" stroke-width="1"/>
<polyline points="631.4,536.3 692.7,578.2 721.7,593.7" stroke="#00ffff" stroke-width="1"/>
<polyline points="634.0,543.2 689.3,581.6 700.0,590.0 712.0,594.0" stroke="#00ffff" stroke-width="1"/>
<polyline points="693.4,470.3 696.2,484.5 924.7,311.0 956.8,285.4 965.9,282.0" stroke="#00ffff" stroke-width="1"/>
<polyline points="697.9,486.2 927.6,312.7 959.0,287.5" stroke="#00ffff" stroke-width="1"/>
<polyline points="760.0,525.0 707.0,487.3 836.0,388.5 838.5,387.5 841.0,387.8 849.0,391.5 889.0,420.0" stroke="#00ffff" stroke-width="1"/>
<polyline points="696.5,486.0 745.0,521.0 752.0,531.0" stroke="#00ffff" stroke-width="1"/>
<polyline points="869.7,375.0 864.6,371.6 892.4,349.5 898.0,353.5 920.2,338.2 923.6,338.2 958.2,364.0" stroke="#00ffff" stroke-width="1"/>
<polyline points="398.0,694.0 402.0,706.0 409.0,711.0 417.0,708.0 423.0,701.0" stroke="#00ffff" stroke-width="1"/>
<polyline points="409.0,711.0 470.0,753.0" stroke="#00ffff" stroke-width="1"/>
<polyline points="423.0,701.0 474.0,738.0" stroke="#00ffff" stroke-width="1"/>
</g>
<g stroke-width=".9" shape-rendering="crispEdges">
<polyline points="331.5,731.0 321.0,723.5 984.5,219.5 1084.4,289.7" stroke="#5b5f63" stroke-width="0.9"/>
<polyline points="1084.4,289.7 1075.0,296.8" stroke="#5b5f63" stroke-width="0.9"/>
<polyline points="1075.0,296.8 493.0,739.0" stroke="#8d8890" stroke-width="0.9"/>
<polyline points="346.3,776.0 341.0,736.4 1005.3,232.0 1011.5,274.6 372.0,759.2" stroke="#5b5f63" stroke-width="0.9"/>
<polyline points="372.0,759.2 347.0,777.6" stroke="#6f7f9c" stroke-width="0.8"/>
<polyline points="376.6,798.2 370.4,755.5 1032.8,252.4 1040.8,294.2 376.6,798.2" stroke="#96581f" stroke-width="0.9"/>
<polyline points="652.4,471.0 656.9,503.0 758.2,582.2 752.0,542.2 727.0,561.0" stroke="#5b5f63" stroke-width="0.9"/>
<polyline points="611.0,466.0 652.4,471.0" stroke="#5b5f63" stroke-width="0.9" stroke-opacity="0"/>
<polyline points="640.0,455.0 752.0,542.2" stroke="#5b5f63" stroke-width="0.9"/>
<polyline points="681.7,492.4 739.0,536.0" stroke="#96581f" stroke-width="0.9"/>
<polyline points="698.6,485.3 705.7,524.4" stroke="#96581f" stroke-width="0.9"/>
<polyline points="676.0,524.0 716.0,493.0" stroke="#96581f" stroke-width="0.9"/>
<polyline points="678.0,527.5 718.0,496.5" stroke="#96581f" stroke-width="0.9"/>
</g>
<path d="M705.8 525.3 L721.4 513" stroke="#ff2020" stroke-width="1.1"/><circle cx="721.4" cy="513" r="2.6" fill="#ff3030"/>
<path d="M705.8 525.3 L720.9 536.5" stroke="#20e020" stroke-width="1.1"/><circle cx="720.9" cy="536.5" r="2.9" fill="#22ee22"/>
<path d="M705.8 525.3 L707.2 541" stroke="#20e8f0" stroke-width="1.1"/><circle cx="707.2" cy="541" r="2" fill="#30f0f8"/>
<rect x="711" y="489" width="88" height="13" fill="#9fb6d3"/><rect x="720" y="484" width="8" height="6" rx="1.5" fill="#9fb6d3"/>
<rect x="658" y="502" width="37" height="13" fill="#9fb6d3"/>
<rect x="720" y="517" width="8" height="13" rx="1" fill="#9fb6d3"/><rect x="701" y="524" width="8" height="14" rx="1.5" fill="#9fb6d3"/>
<rect x="420" y="784" width="8.500" height="13" fill="#7f9ac4" opacity=".9"/>
<text x="712.5" y="500.0" font-family="'Liberation Mono','DejaVu Sans Mono',monospace" font-size="14" textLength="82.8" lengthAdjust="spacingAndGlyphs" fill="#9a5a1e" stroke="#9fb6d3" stroke-width=".22" paint-order="fill stroke">PRT_CSYS_DEF</text>
<text x="658.7" y="514.0" font-family="'Liberation Mono','DejaVu Sans Mono',monospace" font-size="14" textLength="33.8" lengthAdjust="spacingAndGlyphs" fill="#9a5a1e" stroke="#9fb6d3" stroke-width=".22" paint-order="fill stroke">RIGHT</text>
<text x="1035.3" y="251.5" font-family="'Liberation Mono','DejaVu Sans Mono',monospace" font-size="14" textLength="18.6" lengthAdjust="spacingAndGlyphs" fill="#9a5a1e" stroke="#b5cce2" stroke-width=".22" paint-order="fill stroke">TOP</text>
<text x="348.5" y="779.3" font-family="'Liberation Mono','DejaVu Sans Mono',monospace" font-size="13" textLength="25.6" lengthAdjust="spacingAndGlyphs" fill="#a8621e" stroke="#6c8bb6" stroke-width=".22" paint-order="fill stroke">DTM1</text>
<text x="421.8" y="794.2" font-family="'Liberation Mono','DejaVu Sans Mono',monospace" font-size="14" textLength="33.8" lengthAdjust="spacingAndGlyphs" fill="#a8621e" stroke="#6989b4" stroke-width=".22" paint-order="fill stroke">FRONT</text>
<text x="722.0" y="529.0" font-family="'Liberation Mono','DejaVu Sans Mono',monospace" font-size="10" textLength="3.8" lengthAdjust="spacingAndGlyphs" fill="#7d6a5a">X</text>
<text x="702.5" y="536.0" font-family="'Liberation Mono','DejaVu Sans Mono',monospace" font-size="10" textLength="3.8" lengthAdjust="spacingAndGlyphs" fill="#7d6a5a">Z</text>
<text x="721.5" y="490.0" font-family="'Liberation Mono','DejaVu Sans Mono',monospace" font-size="8" textLength="3.3" lengthAdjust="spacingAndGlyphs" fill="#7d6a5a">Y</text>
</svg>
<div style="left:538px;top:429px;width:161px;height:41px;background:#000"></div>
<div style="left:538px;top:429px;width:161px;height:41px;line-height:44px;color:#fff;font-family:'Liberation Serif','Noto Serif CJK SC',serif;font-size:22px;letter-spacing:12.600px;white-space:nowrap;padding-left:21.500px">图文设计</div>
<style>
#wbtn{left:1128px;top:1px;width:103px;height:19px;border-radius:0 0 5px 5px;box-shadow:0 0 0 1px rgba(225,238,242,.75),0 0 0 2px rgba(20,45,55,.5);overflow:hidden}
#wbtn div{top:0;height:19px}
.wg{background:linear-gradient(to bottom,#b3c6ca 0,#a0b7bc 48%,#668790 52%,#7796a0 100%)}
#wclose{left:55px;width:48px;background:linear-gradient(to bottom,#dc9c8c 0,#cf715c 45%,#bd361c 52%,#c24428 80%,#cf6440 100%)}
#ddbox{left:940px;top:100px;width:286px;height:20px;background:#fff;border:1px solid #7fa2c0;border-radius:3px}
#ddt{left:946px;top:101px;font-size:12px;line-height:18px;color:#111}
.vsep{top:97px;width:2px;height:24px;background:linear-gradient(to right,#c3d3e0 0,#c3d3e0 1px,#fff 1px,#fff 2px)}
#row2top{left:8px;top:95px;width:1222px;height:1px;background:#fbfdfe}
</style>
<div id="wbtn"><div class="wg" style="left:0;width:28px"></div><div class="wg" style="left:28px;width:27px;border-left:1px solid rgba(20,45,55,.55)"></div><div id="wclose" style="border-left:1px solid rgba(60,20,15,.6)"></div></div>
<svg style="left:1128px;top:0" width="103" height="20" viewBox="0 0 103 20"><rect x="9.5" y="10.5" width="10" height="3" fill="#fff" stroke="#3a4a55" stroke-width=".9" rx=".5"/><path d="M36.5 5.5 H46.5 V13.5 H36.5Z M39 8.2 H44 V11 H39Z" fill="#fff" fill-rule="evenodd" stroke="#3a4a55" stroke-width=".9"/><path d="M74.5 5.5 L77.8 5.5 L79.5 7.8 L81.2 5.5 L84.5 5.5 L81.3 9.6 L84.7 14 L81.2 14 L79.5 11.6 L77.8 14 L74.3 14 L77.7 9.6Z" fill="#fff" stroke="#5a2a25" stroke-width=".9"/></svg>
<div id="row2top"></div>
<div class="vsep" style="left:809px"></div><div class="vsep" style="left:840px"></div>
<svg style="left:816px;top:97px" width="18" height="25" viewBox="816 97 18 25"><rect x="822" y="100" width="5" height="5" fill="#f79a9a" stroke="#8a8a8a" stroke-width=".7"/><rect x="822" y="105" width="5" height="5" fill="#ffef20" stroke="#8a8a6a" stroke-width=".7"/><rect x="823.3" y="106" width="2.2" height="2.2" fill="#fff"/><circle cx="824.5" cy="114.6" r="4.7" fill="#fff"/><circle cx="824.5" cy="114.6" r="4.2" fill="#10b030" stroke="#063" stroke-width=".8"/><circle cx="823.2" cy="113.2" r="1.5" fill="#8fe8a0"/></svg>
<div id="ddbox"></div><div id="ddt">智能</div>
<svg style="left:1212px;top:105px" width="12" height="10" viewBox="0 0 12 10"><path d="M2.5 3.5 L9.5 3.5 L6 7.5Z" fill="#222"/></svg>
<div class="hgrip" style="left:1162px;top:129px;width:40px"></div>
<div class="hgrip" style="left:1204px;top:129px;width:27px"></div>
<div class="hgrip" style="left:1162px;top:367px;width:40px"></div>
<div class="hgrip" style="left:1162px;top:465px;width:40px"></div>
<div class="hgrip" style="left:1162px;top:647px;width:40px"></div>
<svg style="left:1161px;top:124px" width="70" height="768" viewBox="1161 124 70 768">
<g transform="translate(1164.0,140.0)"><path d="M2.5 2.5 H19.5 M2.5 19.5 H19.5" stroke="#1237c9" stroke-width="1.2" stroke-dasharray="1.2 3"/><path d="M2.5 6 V17 M19.5 6 V17" stroke="#1237c9" stroke-width="1.2" stroke-dasharray="1.2 3"/><path d="M3 15 C5 4 10 4 12.5 10.5 C14.5 15.5 17 15 19.5 12.5" fill="none" stroke="#1a6fff" stroke-width="1.7"/></g>
<g transform="translate(1163.5,169.0)"><path d="M2 17 L6.5 5.5 L20 5.5 L15.5 17Z" fill="none" stroke="#8a3a10" stroke-width="1.6"/></g>
<g transform="translate(1163.5,197.0)"><path d="M6 20.5 L16 1" stroke="#8a3a10" stroke-width="1.9" stroke-dasharray="4.5 2.2"/></g>
<g transform="translate(1164.0,224.0)"><path d="M1.5 16.5 C3 9 7 6.5 10 9.5 C12.5 12 15.5 10 20.5 5" fill="none" stroke="#8a3a10" stroke-width="1.6"/></g>
<g transform="translate(1164.0,252.0)"><path d="M8 2 L12 6.5 M12 2 L8 6.5 M3 12 L7 16.5 M7 12 L3 16.5 M13 10 L17 14.5 M17 10 L13 14.5" stroke="#8a3a10" stroke-width="1.5"/></g>
<path d="M1193 259.5 L1197 263 L1193 266.5Z" fill="#333"/>
<g transform="translate(1164.0,281.0)"><path d="M1.5 12 L14 12 M7 4 L14 19 M14.5 4 L7 19" stroke="#8a3a10" stroke-width="1.4" fill="none"/><path d="M1.5 2 L3.2 4.3 L5 2 M3.2 4.3 L3.2 6.5 M16.5 10 L20 14 M20 10 L16.5 14 M1.5 17 L5 17 L1.5 21 L5 21" stroke="#555" stroke-width="1" fill="none"/></g>
<g transform="translate(1164.0,309.0)"><rect x="2.5" y="14.5" width="17" height="6.5" fill="#f2ec56" stroke="#888" stroke-width=".9"/><path d="M5.5 21 V18 M8.5 21 V17 M11.5 21 V18 M14.5 21 V17 M17.5 21 V18" stroke="#555" stroke-width=".8"/><path d="M5 7 L9 12 M9 7 L5 12" stroke="#8a3a10" stroke-width="1.5"/><path d="M10.5 1.5 L15.5 11" stroke="#8a3a10" stroke-width="1.9" stroke-dasharray="2.6 1.8"/></g>
<g transform="translate(1164.0,337.0)"><g transform="rotate(-42 11 11)" fill="none" stroke="#8a3a10" stroke-width="1.5"><path d="M-2 11 H3 M19 11 H24"/><rect x="2" y="7.5" width="9.5" height="7" rx="3"/><rect x="10.5" y="7.5" width="9.5" height="7" rx="3"/><rect x="3.2" y="8.7" width="7" height="4.6" rx="2" stroke="#e0b050" stroke-width=".7"/><rect x="11.7" y="8.7" width="7" height="4.6" rx="2" stroke="#e0b050" stroke-width=".7"/></g></g>
<g transform="translate(1164.0,378.0)"><rect x="1.5" y="2" width="12.5" height="8" fill="#ffff99" stroke="#8a8a3a" stroke-width="1"/><path d="M14.5 6.5 H20 L13 19" fill="none" stroke="#111" stroke-width="1.2"/><path d="M12 15.5 L12.6 20 L16.5 17.5Z" fill="#111"/></g>
<g transform="translate(1164.0,407.0)"><rect x="1.5" y="1.5" width="13" height="12" fill="#ffff99" stroke="#8a8a3a" stroke-width="1"/><path d="M4.5 8.5 A5 5 0 0 1 13.5 8.5 V13 H4.5Z" fill="#e8e4dc" stroke="#555" stroke-width=".9"/><path d="M4.5 7 H13.5" stroke="#555" stroke-width=".8"/><text x="6.3" y="12.6" font-family="Liberation Sans,sans-serif" font-size="7" fill="#333">A</text><path d="M15 7.5 H20 L13 20" fill="none" stroke="#111" stroke-width="1.2"/><path d="M12 16.5 L12.6 21 L16.5 18.5Z" fill="#111"/></g>
<g transform="translate(1164.0,434.0)"><g fill="#e6eaee" stroke="#9aa3aa" stroke-width="1"><rect x="1.5" y="2" width="10.5" height="5.5"/><rect x="5.5" y="10.5" width="10.5" height="5.5"/></g><path d="M12.5 4.5 H16.5 L14.5 9 M16.5 12.5 H20 L15 21 M14.5 18 L15 21 L17.5 19.5" fill="none" stroke="#9aa3aa" stroke-width="1"/></g>
<g transform="translate(1164.0,477.0)"><path d="M2 4 H7.5 L9.5 8.5 V20 H2Z M20 4 H14.5 L12.5 8.5 V20 H20Z" fill="#8ff5f5" stroke="none"/><path d="M2 4 H7.5 L9.5 8.5 V20 H12.5 V8.5 L14.5 4 H20" fill="none" stroke="#234" stroke-width="1"/><path d="M3 20 L9 14 M3 15 L8 10 M3 10 L7 6 M13 20 L20 13 M13.5 14 L20 7.5" stroke="#d8fbfb" stroke-width="1"/></g>
<g transform="translate(1164.0,505.0)"><path d="M2.5 6 L5 3.5 H19.5 V16 L17 18.5 H2.5Z" fill="#f4f4ee" stroke="#333" stroke-width="1"/><path d="M2.5 6 H17 V18.5 M17 6 L19.5 3.5" fill="none" stroke="#333" stroke-width="1"/><rect x="5.5" y="8.5" width="8.5" height="7.5" fill="#8ff5f5" stroke="#567" stroke-width=".9"/></g>
<g transform="translate(1164.0,533.0)"><path d="M8 12 L8 5.5 L13 .5 L13 7" fill="#eceee8" stroke="#9aa" stroke-width=".8"/><path d="M14.500 12 L21 5.500 L21 14.500 L14.500 21Z" fill="#f2f2ea" stroke="#aab" stroke-width=".8"/><path d="M2 21.500 V11 L8 5 M2 21.500 H14.500" fill="none" stroke="#444" stroke-width="1" stroke-dasharray="1.2 1.6"/><rect x="4.500" y="11.500" width="10" height="9.500" fill="#8ff5f5" stroke="#567" stroke-width=".8"/></g>
<path d="M1193 540.500 L1197 544 L1193 547.500Z" fill="#333"/>
<g transform="translate(1164.0,562.5)"><path d="M2 7 L6 3.500 H13 L9.500 7Z" fill="#f2f2ea" stroke="#888" stroke-width=".8"/><rect x="2" y="7" width="7.500" height="10" fill="#d8f6f0" stroke="#888" stroke-width=".8"/><path d="M9.500 7 L13 3.500 L19.500 14.500 L14 19.500 L9.500 17Z" fill="#6fe8e8" stroke="#177" stroke-width="1"/><path d="M13 3.500 L14 19.500" stroke="#177" stroke-width=".9"/><path d="M2 19.500 H14" stroke="#2aa" stroke-width="1.2"/></g>
<g transform="translate(1164.0,591.0)"><path d="M2 8 H7 Q15 8.500 15.500 20.500 H2Z" fill="#efeee4"/><path d="M15.500 20.500 L20 16.500 V11 L15.500 14Z" fill="#d9d6c4"/><path d="M5 4.500 L9.500 2.500 Q19 4 20 12 L15.500 15.500 Q14.500 8.500 6.500 7.500Z" fill="#8ff5f5" stroke="#666" stroke-width=".9"/><path d="M2.500 7.500 L6 4.500" stroke="#aaa" stroke-width=".9"/></g>
<g transform="translate(1164.0,618.5)"><path d="M2 8.500 H8 L15.500 15 V21 H2Z" fill="#efeee4"/><path d="M15.500 21 L20 17 V11.500 L15.500 15Z" fill="#d9d6c4"/><path d="M8 8.500 L12.500 4 L20 11.500 L15.500 15Z" fill="#8ff5f5" stroke="#666" stroke-width=".9"/><path d="M2 8.500 L6.500 4 H12.500" stroke="#999" stroke-width=".9" fill="#f6f6f0"/></g>
<g transform="translate(1164.0,659.0)"><rect x="2.500" y="10.500" width="8.500" height="8.500" fill="#8ff5f5" stroke="#555" stroke-width="1.1"/><path d="M2.500 10.500 L10 3 M11 19 L19.500 10.500 M11 10.500 L18.500 3" stroke="#555" stroke-width="1" stroke-dasharray="2.2 1.6" fill="none"/><path d="M10 2.500 H19.500 V11" fill="none" stroke="#222" stroke-width="1.5"/><path d="M12 4 H18 V9.500Z" fill="#bff8f8"/></g>
<g transform="translate(1164.0,687.0)"><path d="M11 .5 V21" stroke="#222" stroke-width="1.1" stroke-dasharray="2.5 1.5"/><circle cx="4.500" cy="11.500" r="3.400" fill="#c8f8f8" stroke="#555" stroke-width=".9"/><circle cx="17.500" cy="11.500" r="3.400" fill="#6fe8e8" stroke="#333" stroke-width="1"/><path d="M4.500 8 Q8 4 11 6 Q15 4.500 18 8.200" fill="none" stroke="#555" stroke-width=".9" stroke-dasharray="1.500 1.500"/><path d="M11.500 6.500 L16 10.500" stroke="#222" stroke-width="1.100"/></g>
<g transform="translate(1164.0,715.5)"><path d="M1.500 6 L7 1.500 L10 5 L4.500 9.500Z" fill="#6fe8e8" stroke="#177" stroke-width=".9"/><path d="M7 1.500 Q12 9 20 9.500 V20.500 H9.500 Q9 13 4.500 9.500Z" fill="#f4f4f0" stroke="#555" stroke-width=".9"/><path d="M4.500 9.500 Q9 13 9.500 20.500 L20 20.500 L4.500 9.500" fill="#b0b4b8" stroke="#555" stroke-width=".7"/><path d="M9.500 20.500 L20 9.500 V20.500Z" fill="#9ff0f0" stroke="#177" stroke-width=".8"/></g>
<g transform="translate(1164.0,742.0)"><path d="M1.500 15.500 Q4 6 12 3.500 Q16 2.500 20.500 5 Q18 10 16.500 17.500 Q9 13.500 1.500 15.500Z" fill="#f2f4f2" stroke="#555" stroke-width=".9"/><path d="M12 3.500 Q16 2.500 20.500 5 Q18 10 16.500 17.500 L13.500 16 Q14 9 12 3.500Z" fill="#8ff5f5" stroke="#177" stroke-width=".9"/><path d="M5 9 Q11 7.500 18.500 10.500 M12 3.500 Q10 9 9 14.200" fill="none" stroke="#2aa" stroke-width=".9"/></g>
<g transform="translate(1164.0,772.0)"><path d="M3.500 5.500 Q11 2 19 5.500 V16.500 Q11 13.500 3.500 19Z" fill="#d4f7f7" stroke="#444" stroke-width="1.100"/></g>
<g transform="translate(1205.5,140.5)"><g opacity=".75"><path d="M1 2.500 Q7.500 3.500 7.500 11 V18.500 H1Z" fill="#eef2f6" stroke="#b9c3cb" stroke-width="1"/><path d="M21 2.500 Q14.500 3.500 14.500 11 V18.500 H21Z" fill="#eef2f6" stroke="#b9c3cb" stroke-width="1"/><path d="M11 .5 V21" stroke="#a8b2ba" stroke-width="1.100"/></g></g>
<g transform="translate(1205.5,169.0)"><g opacity=".8"><rect x="8" y="1.500" width="11.500" height="11.500" fill="#eef2f6" stroke="#b9c3cb" stroke-width="1"/><circle cx="7.500" cy="12.500" r="6" fill="#e6ebf0" fill-opacity=".8" stroke="#b9c3cb" stroke-width="1"/></g></g>
<g transform="translate(1205.5,197.0)"><g opacity=".8"><circle cx="7.500" cy="12.500" r="6" fill="#dfe4ea" stroke="#d0d7dd" stroke-width="1"/><path d="M8 1.500 H19.500 V13 H13 V7.500 H8Z" fill="#eef2f6" stroke="#b9c3cb" stroke-width="1"/></g></g>
<g transform="translate(1205.5,224.0)"><g opacity=".85"><path d="M2.500 5 L5 2.500 H19.500 V16.500 L17 19 H2.500Z" fill="#eef2f6" stroke="#a9b3bb" stroke-width="1"/><path d="M17 5 V19 M17 5 L19.500 2.500 M2.500 5 H17" stroke="#a9b3bb" stroke-width="1" fill="none"/><path d="M5.500 8 h2 M9 8 h2 M12.500 8 h2 M5.500 11.500 h2 M9 11.500 h2 M12.500 11.500 h2 M5.500 15 h2 M9 15 h2 M12.500 15 h2" stroke="#98a2aa" stroke-width="1.300"/></g></g>
</svg>
<div style="left:-29px;top:420.5px;width:50px;height:50px;border-radius:50%;background:rgba(78,172,240,.84);box-shadow:0 0 2px rgba(60,60,60,.35)"></div>
<div style="left:-29px;top:594.8px;width:50px;height:50px;border-radius:50%;background:rgba(112,204,120,.82);box-shadow:0 0 2px rgba(60,60,60,.35)"></div>
<div style="left:-29px;top:687.5px;width:50px;height:50px;border-radius:50%;background:rgba(78,172,240,.84);box-shadow:0 0 2px rgba(60,60,60,.35)"></div>
<div style="left:-29px;top:778.5px;width:50px;height:50px;border-radius:50%;background:rgba(236,172,76,.86);box-shadow:0 0 2px rgba(60,60,60,.35)"></div>
<div style="left:0;top:834px;width:11px;height:58px;background:linear-gradient(to right,#3d4354 0,#262f42 3px,#2a3446 7px,#4b5264 9px,#30384a 11px);border-radius:0 3px 3px 0"></div>
<div style="left:2px;top:841px;width:5px;height:1px;background:#1a2233"></div>
<div style="left:2px;top:843px;width:5px;height:1px;background:#1a2233"></div>
<div style="left:2px;top:845px;width:5px;height:1px;background:#1a2233"></div>
<div style="left:2px;top:847px;width:5px;height:1px;background:#1a2233"></div>
<div style="left:2px;top:849px;width:5px;height:1px;background:#1a2233"></div>
<div style="left:2px;top:851px;width:5px;height:1px;background:#1a2233"></div>
<div style="left:2px;top:853px;width:5px;height:1px;background:#1a2233"></div>
<div style="left:2px;top:855px;width:5px;height:1px;background:#1a2233"></div>
<div style="left:2px;top:857px;width:5px;height:1px;background:#1a2233"></div>
<div style="left:2px;top:859px;width:5px;height:1px;background:#1a2233"></div>
<div style="left:2px;top:861px;width:5px;height:1px;background:#1a2233"></div>
<div style="left:2px;top:863px;width:5px;height:1px;background:#1a2233"></div>
<div style="left:2px;top:865px;width:5px;height:1px;background:#1a2233"></div>
<div style="left:2px;top:867px;width:4px;height:1px;background:#c8d84a"></div>
<div style="left:2px;top:869px;width:4px;height:1px;background:#b4d84a"></div>
<div style="left:2px;top:871px;width:4px;height:1px;background:#9cd84e"></div>
<div style="left:2px;top:873px;width:4px;height:1px;background:#84d458"></div>
<div style="left:2px;top:875px;width:4px;height:1px;background:#6cd060"></div>
<div style="left:2px;top:877px;width:4px;height:1px;background:#58cc70"></div>
<div style="left:2px;top:879px;width:4px;height:1px;background:#48c884"></div>
<div style="left:2px;top:881px;width:4px;height:1px;background:#3cc498"></div>
<div style="left:2px;top:883px;width:4px;height:1px;background:#34c4ac"></div>
<div style="left:2px;top:885px;width:4px;height:1px;background:#30c8bc"></div>
</body>
</html>
